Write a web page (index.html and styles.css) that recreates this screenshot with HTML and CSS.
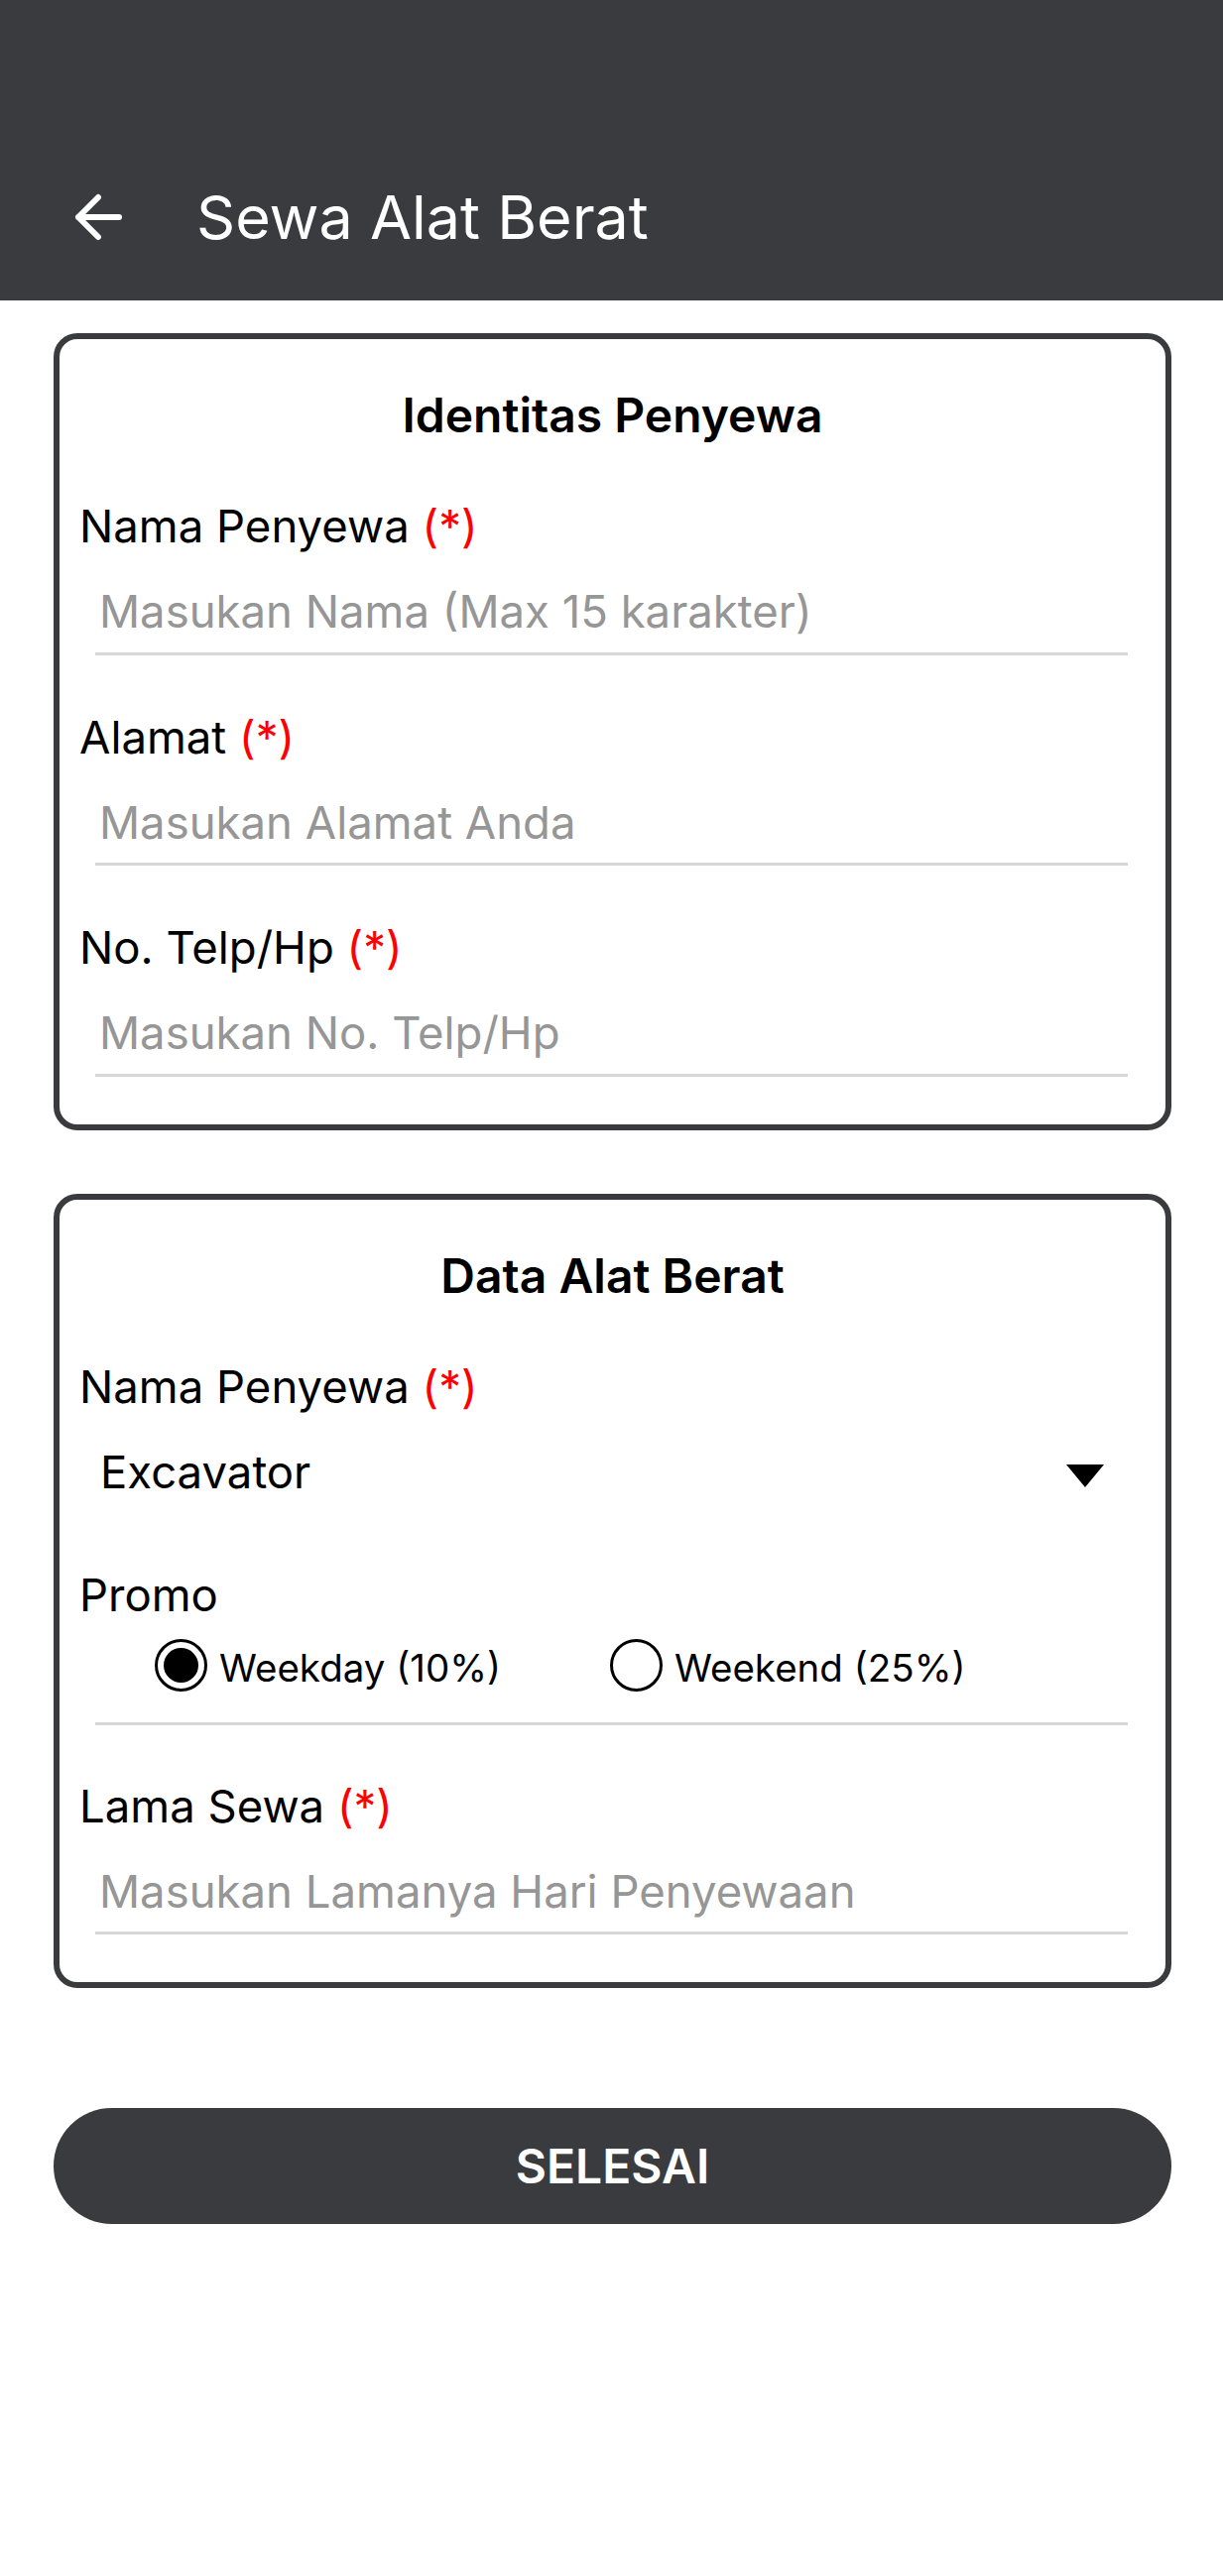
FILE: index.html
```html
<!DOCTYPE html>
<html lang="id">
<head>
<meta charset="utf-8">
<title>Sewa Alat Berat</title>
<link rel="stylesheet" href="styles.css">
</head>
<body>
<header class="appbar">
  <div class="toolbar">
    <svg class="back" width="48" height="48" viewBox="0 0 48 48" aria-hidden="true">
      <path d="M45 24 H4 M24 4 L4 24 L24 44" fill="none" stroke="#ffffff" stroke-width="6" stroke-linecap="round" stroke-linejoin="round"/>
    </svg>
    <h1 class="title">Sewa Alat Berat</h1>
  </div>
</header>

<main class="content">
  <section class="card">
    <h2 class="card-title">Identitas Penyewa</h2>

    <div class="label">Nama Penyewa <span class="req">(*)</span></div>
    <div class="input"><span class="hint">Masukan Nama (Max 15 karakter)</span></div>

    <div class="label">Alamat <span class="req">(*)</span></div>
    <div class="input"><span class="hint">Masukan Alamat Anda</span></div>

    <div class="label">No. Telp/Hp <span class="req">(*)</span></div>
    <div class="input"><span class="hint">Masukan No. Telp/Hp</span></div>
  </section>

  <section class="card card-second">
    <h2 class="card-title">Data Alat Berat</h2>

    <div class="label">Nama Penyewa <span class="req">(*)</span></div>
    <div class="spinner">
      <span class="spinner-value">Excavator</span>
      <span class="caret"></span>
    </div>

    <div class="label label-promo">Promo</div>
    <div class="radio-group">
      <div class="radio-item radio-first">
        <span class="radio checked"></span>
        <span class="radio-text">Weekday (10%)</span>
      </div>
      <div class="radio-item">
        <span class="radio"></span>
        <span class="radio-text">Weekend (25%)</span>
      </div>
    </div>

    <div class="label label-after-radio">Lama Sewa <span class="req">(*)</span></div>
    <div class="input"><span class="hint">Masukan Lamanya Hari Penyewaan</span></div>
  </section>

  <button class="submit" type="button">SELESAI</button>
</main>
</body>
</html>
```

FILE: styles.css
```css
* {
  box-sizing: border-box;
}

html, body {
  margin: 0;
  padding: 0;
  background: #ffffff;
}

body {
  width: 1233px;
  min-height: 2598px;
  font-family: Inter, "Noto Sans", "Liberation Sans", sans-serif;
  color: #000000;
}

.appbar {
  background: #3a3b3f;
  padding-top: 135px;
}

.toolbar {
  height: 168px;
  display: flex;
  align-items: center;
  padding-left: 75px;
}

.back {
  display: block;
  flex: none;
}

.title {
  margin: 0 0 0 75px;
  font-size: 61px;
  line-height: 72px;
  font-weight: 400;
  color: #ffffff;
}

.content {
  padding: 33px 52px 0 54px;
}

.card {
  border: 6px solid #3a3b3f;
  border-radius: 24px;
  padding: 48px 19px 48px 19px;
}

.card-second {
  margin-top: 64px;
}

.card-title {
  margin: 0;
  text-align: center;
  font-size: 48px;
  line-height: 58px;
  font-weight: 600;
}

.label {
  margin-top: 56px;
  padding-left: 1px;
  font-size: 45.5px;
  line-height: 54px;
  font-weight: 400;
}

.req {
  color: #ff0000;
}

.input {
  margin: 32px 19px 0 17px;
  padding: 0 0 13.5px 4px;
  border-bottom: 3px solid #d6d6d6;
  font-size: 45.5px;
  line-height: 54px;
}

.hint {
  color: #969696;
}

.spinner {
  margin: 32px 19px 0 17px;
  padding: 0 24px 0 5px;
  display: flex;
  align-items: center;
  justify-content: space-between;
  font-size: 45.5px;
  line-height: 54px;
}

.caret {
  width: 0;
  height: 0;
  border-left: 19.5px solid transparent;
  border-right: 19.5px solid transparent;
  border-top: 23px solid #000000;
  margin-top: 8px;
}

.label-promo {
  margin-top: 70px;
}

.radio-group {
  margin: 17px 19px 0 17px;
  padding: 0 0 31px 60px;
  border-bottom: 3px solid #d6d6d6;
  display: flex;
  align-items: center;
}

.radio-item {
  display: flex;
  align-items: center;
  height: 53px;
}

.radio-first {
  width: 459px;
}

.radio {
  width: 53px;
  height: 53px;
  border: 3.5px solid #000000;
  border-radius: 50%;
  display: flex;
  align-items: center;
  justify-content: center;
  flex: none;
}

.radio.checked::after {
  content: "";
  width: 35px;
  height: 35px;
  border-radius: 50%;
  background: #000000;
}

.radio-text {
  margin: 6px 0 0 12px;
  font-size: 38.5px;
  line-height: 47px;
}

.label-after-radio {
  margin-top: 55px;
}

.submit {
  display: block;
  width: 100%;
  height: 117px;
  margin-top: 121px;
  border: none;
  border-radius: 58.5px;
  background: #3a3b3f;
  color: #ffffff;
  font-family: Inter, "Noto Sans", "Liberation Sans", sans-serif;
  font-size: 48px;
  font-weight: 600;
  line-height: 58px;
  padding: 0;
}
```
